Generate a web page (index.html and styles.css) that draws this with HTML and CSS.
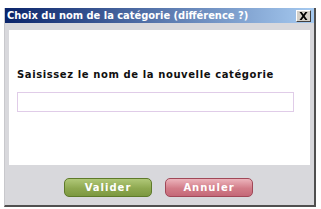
FILE: index.html
```html
<!DOCTYPE html>
<html>
<head>
<meta charset="utf-8">
<link rel="stylesheet" href="styles.css">
</head>
<body>
<div class="dialog">
  <div class="titlebar">
    <span class="title">Choix du nom de la catégorie (différence ?)</span>
    <span class="close"><svg width="9" height="8" viewBox="0 0 9 8"><path d="M0.5 0h2.2l1.8 2.4L6.3 0h2.2L5.6 4l2.9 4H6.3L4.5 5.6 2.7 8H0.5l2.9-4z" fill="#000"/></svg></span>
  </div>
  <div class="body">
    <div class="panel">
      <div class="label">Saisissez le nom de la nouvelle catégorie</div>
      <div class="input"></div>
    </div>
    <div class="buttons">
      <span class="btn ok">Valider</span>
      <span class="btn cancel">Annuler</span>
    </div>
  </div>
</div>
</body>
</html>
```
FILE: styles.css
```css
html, body { margin: 0; padding: 0; background: #fff; }
body { font-family: "DejaVu Sans", Verdana, sans-serif; }
.dialog {
  margin: 8px 0 0 4px;
  width: 312px;
  height: 199px;
  box-sizing: border-box;
  border-left: 1px solid #c8c8cc;
  border-right: 2px solid #505050;
  border-bottom: 2px solid #505050;
  background: #d8d8dc;
  display: flex;
  flex-direction: column;
}
.titlebar {
  height: 15px;
  background: linear-gradient(to right, #0a246a, #a6caf0);
  display: flex;
  align-items: center;
  justify-content: space-between;
  padding: 0 3px 0 2px;
}
.title {
  color: #fff;
  font-family: "DejaVu Sans Condensed", "DejaVu Sans", sans-serif;
  font-weight: bold;
  font-size: 11px;
  white-space: nowrap;
}
.close {
  width: 15px;
  height: 12px;
  box-sizing: border-box;
  background: #d4d0c8;
  border: 1px solid;
  border-color: #fff #404040 #404040 #fff;
  display: flex;
  align-items: center;
  justify-content: center;
}
.body {
  flex: 1;
  display: flex;
  flex-direction: column;
  padding: 7px 4px 0 4px;
}
.panel {
  background: #fff;
  height: 135px;
  padding: 39px 16px 0 8px;
  box-sizing: border-box;
}
.label {
  font-weight: bold;
  font-size: 10px;
  letter-spacing: 0.6px;
  color: #101010;
  white-space: nowrap;
}
.input {
  margin-top: 12px;
  height: 20px;
  box-sizing: border-box;
  border: 1px solid #e0cce8;
}
.buttons {
  display: flex;
  gap: 13px;
  padding: 13px 0 0 55px;
}
.btn {
  width: 88px;
  height: 19px;
  box-sizing: border-box;
  border-radius: 5px;
  color: #fff;
  font-weight: bold;
  font-size: 10px;
  letter-spacing: 1px;
  display: flex;
  align-items: center;
  justify-content: center;
}
.ok {
  background: linear-gradient(#b0c878, #8ea850 55%, #7c9840);
  border: 1px solid #5e7a2a;
}
.cancel {
  background: linear-gradient(#ecb4bc, #d27c88 55%, #c46878);
  border: 1px solid #a04858;
}
```
